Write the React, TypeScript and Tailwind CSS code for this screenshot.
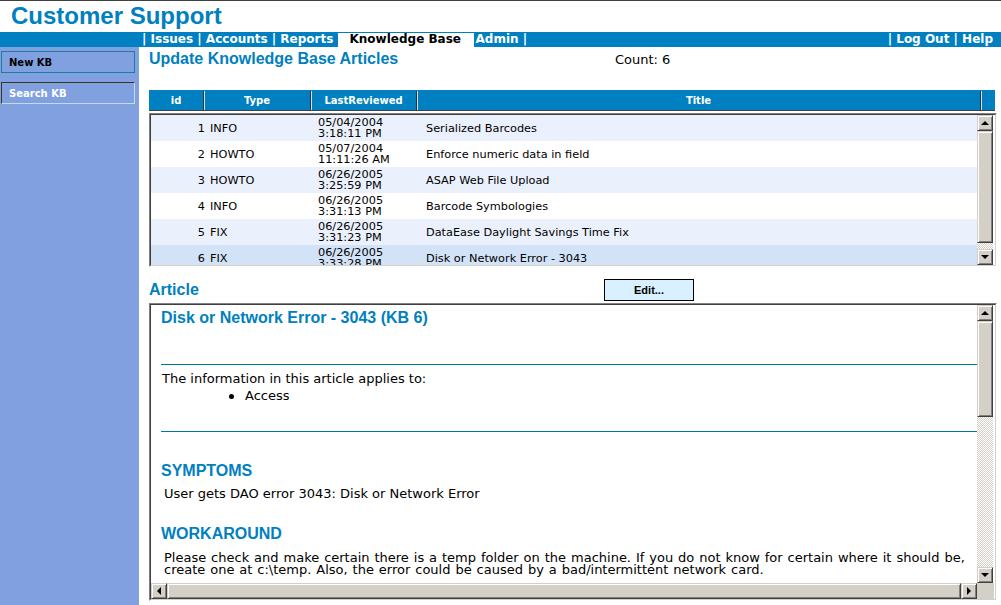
import React from "react";

const BLUE = "text-[#0080c0]";

function Arrow({ dir }: { dir: "up" | "down" | "left" | "right" }) {
  if (dir === "up")
    return <div className="w-0 h-0 border-l-[4px] border-r-[4px] border-b-[4px] border-l-transparent border-r-transparent border-b-black" />;
  if (dir === "down")
    return <div className="w-0 h-0 border-l-[4px] border-r-[4px] border-t-[4px] border-l-transparent border-r-transparent border-t-black" />;
  if (dir === "left")
    return <div className="w-0 h-0 border-t-[4px] border-b-[4px] border-r-[4px] border-t-transparent border-b-transparent border-r-black" />;
  return <div className="w-0 h-0 border-t-[4px] border-b-[4px] border-l-[4px] border-t-transparent border-b-transparent border-l-black" />;
}

const raised =
  "bg-[#d4d0c8] border border-t-[#d4d0c8] border-l-[#d4d0c8] border-r-[#404040] border-b-[#404040] shadow-[inset_1px_1px_0_#ffffff,inset_-1px_-1px_0_#808080]";

function ScrollBtn({ dir }: { dir: "up" | "down" | "left" | "right" }) {
  return (
    <div className={`w-[16px] h-[16px] shrink-0 flex items-center justify-center ${raised}`}>
      <Arrow dir={dir} />
    </div>
  );
}

const checker =
  "bg-[repeating-conic-gradient(#d4d0c8_0%_25%,#ffffff_0%_50%)] bg-[length:2px_2px] bg-size-[2px_2px]";

function VScroll({ thumb }: { thumb: number }) {
  return (
    <div className="w-[17px] shrink-0 flex flex-col items-start h-full">
      <ScrollBtn dir="up" />
      <div className={`w-[16px] shrink-0 ${raised}`} style={{ height: thumb }} />
      <div className={`w-[16px] flex-1 ${checker}`} />
      <ScrollBtn dir="down" />
    </div>
  );
}

function Inset({ className, children }: { className: string; children: React.ReactNode }) {
  return (
    <div className={`border border-t-[#808080] border-l-[#808080] border-r-white border-b-white ${className}`}>
      <div className="w-full h-full border border-t-[#404040] border-l-[#404040] border-r-[#d4d0c8] border-b-[#d4d0c8] bg-white flex overflow-hidden">
        {children}
      </div>
    </div>
  );
}

const rows = [
  { id: 1, type: "INFO", d: "05/04/2004", t: "3:18:11 PM", title: "Serialized Barcodes" },
  { id: 2, type: "HOWTO", d: "05/07/2004", t: "11:11:26 AM", title: "Enforce numeric data in field" },
  { id: 3, type: "HOWTO", d: "06/26/2005", t: "3:25:59 PM", title: "ASAP Web File Upload" },
  { id: 4, type: "INFO", d: "06/26/2005", t: "3:31:13 PM", title: "Barcode Symbologies" },
  { id: 5, type: "FIX", d: "06/26/2005", t: "3:31:23 PM", title: "DataEase Daylight Savings Time Fix" },
  { id: 6, type: "FIX", d: "06/26/2005", t: "3:33:28 PM", title: "Disk or Network Error - 3043" },
];

const arial = "font-['Liberation_Sans',Arial,sans-serif]";
const dejavu = "font-['DejaVu_Sans',Verdana,sans-serif]";

export default function App() {
  return (
    <div className={`w-[1001px] h-[605px] overflow-hidden bg-white ${dejavu}`}>
      <div className="border-t border-[#404040]" />
      <div className={`h-[31px] pt-[1px] pl-[11px] leading-[28px] text-[24px] font-bold ${BLUE} ${arial}`}>
        Customer Support
      </div>
      <div className="h-[15px] bg-[#0080c0] flex text-[12px] font-bold leading-[15px] text-white whitespace-pre">
        <div className="w-[142px] shrink-0" />
        <span>| Issues | Accounts | Reports </span>
        <span className="mt-[1px] h-[14px] w-[136px] bg-white text-black pl-[12px] leading-[13px]">Knowledge Base</span>
        <span className="ml-[2px]">Admin |</span>
        <div className="flex-1" />
        <span className="pr-[8px]">| Log Out | Help</span>
      </div>
      <div className="flex">
        <aside className="w-[139px] h-[558px] shrink-0 bg-[#80a0e0] pt-[4px] pl-[1px]">
          <div className="w-[134px] h-[22px] border border-[#1a7ea0] flex items-center pl-[7px] pt-[1px] text-[10px] font-bold text-black">
            New KB
          </div>
          <div className="mt-[9px] w-[134px] h-[22px] border border-t-[#3a3820] border-l-[#3a3820] border-r-[#c8d8e8] border-b-[#c8d8e8] flex items-center pl-[7px] text-[10px] font-bold text-white">
            Search KB
          </div>
        </aside>
        <main className="pl-[10px] w-[858px]">
          <div className="mt-[2px] h-[20px] flex items-baseline">
            <div className={`w-[466px] text-[16px] leading-[20px] font-bold ${BLUE} ${arial}`}>
              Update Knowledge Base Articles
            </div>
            <div className="text-[13px] text-black">Count: 6</div>
          </div>
          <div className="mt-[21px] w-[846px] h-[21px] bg-[#0080c0] border-b border-[#404040] flex text-[10px] font-bold text-white leading-[20px] pt-[1px]">
            <div className="w-[55px] border-r border-[#303030] text-center">id</div>
            <div className="w-[107px] border-r border-[#303030] text-center shadow-[inset_1px_0_0_#d0e0e8]">Type</div>
            <div className="w-[106px] border-r border-[#303030] text-center shadow-[inset_1px_0_0_#d0e0e8]">LastReviewed</div>
            <div className="w-[564px] border-r border-[#303030] text-center shadow-[inset_1px_0_0_#d0e0e8]">Title</div>
            <div className="flex-1 shadow-[inset_1px_0_0_#d0e0e8]" />
          </div>
          <Inset className="mt-[2px] w-[848px] h-[154px]">
            <div className="w-[826px] h-[150px] overflow-hidden text-[11.3px] text-black">
              {rows.map((r, i) => (
                <div
                  key={r.id}
                  className={`h-[26px] flex items-center ${
                    i === 5 ? "bg-[#d2e3f8]" : i % 2 === 0 ? "bg-[#ebf1fc]" : "bg-white"
                  }`}
                >
                  <div className="w-[54px] text-right leading-[11px]">{r.id}</div>
                  <div className="w-[105px] pl-[5px] leading-[11px]">{r.type}</div>
                  <div className="w-[107px] pl-[8px] leading-[11px]">
                    <div>{r.d}</div>
                    <div>{r.t}</div>
                  </div>
                  <div className="flex-1 pl-[9px] leading-[11px] whitespace-nowrap">{r.title}</div>
                </div>
              ))}
            </div>
            <VScroll thumb={112} />
          </Inset>
          <div className="mt-[12px] h-[22px] flex items-center">
            <div className={`w-[455px] text-[16px] leading-[20px] font-bold ${BLUE} ${arial}`}>Article</div>
            <div className={`w-[90px] h-[22px] bg-[#d8f0ff] border border-black flex items-center justify-center text-[11px] font-bold text-black ${arial}`}>
              Edit...
            </div>
          </div>
          <Inset className="mt-[2px] w-[848px] h-[298px]">
            <div className="flex flex-col w-[826px] h-full">
              <div className="flex-1 overflow-hidden text-[13px] text-black">
                <div className={`mt-[3px] ml-[10px] text-[16px] leading-[20px] font-bold whitespace-nowrap ${BLUE} ${arial}`}>
                  Disk or Network Error - 3043 (KB 6)
                </div>
                <div className="mt-[36px] ml-[10px] h-px bg-[#00789a]" />
                <div className="mt-[5px] ml-[11px] leading-[17px]">The information in this article applies to:</div>
                <div className="flex items-center leading-[17px]">
                  <div className="ml-[78px] w-[5px] h-[5px] rounded-full bg-black mt-[2px]" />
                  <div className="ml-[11px]">Access</div>
                </div>
                <div className="mt-[27px] ml-[10px] h-px bg-[#00789a]" />
                <div className={`mt-[29px] ml-[10px] text-[16px] leading-[20px] font-bold ${BLUE} ${arial}`}>SYMPTOMS</div>
                <div className="mt-[4px] ml-[13px] leading-[17px]">User gets DAO error 3043: Disk or Network Error</div>
                <div className={`mt-[22px] ml-[10px] text-[16px] leading-[20px] font-bold ${BLUE} ${arial}`}>WORKAROUND</div>
                <div className="mt-[8px] ml-[13px] leading-[12px] whitespace-nowrap [word-spacing:0.8px]">
                  <div>Please check and make certain there is a temp folder on the machine. If you do not know for certain where it should be,</div>
                  <div>create one at c:\temp. Also, the error could be caused by a bad/intermittent network card.</div>
                </div>
              </div>
              <div className="h-[16px] flex shrink-0">
                <ScrollBtn dir="left" />
                <div className={`flex-1 h-[16px] ${raised}`} />
                <ScrollBtn dir="right" />
              </div>
            </div>
            <div className="flex flex-col w-[17px] h-full">
              <div className="flex-1 min-h-0">
                <VScroll thumb={96} />
              </div>
              <div className="h-[16px] w-[17px] bg-[#d4d0c8]" />
            </div>
          </Inset>
        </main>
      </div>
    </div>
  );
}
